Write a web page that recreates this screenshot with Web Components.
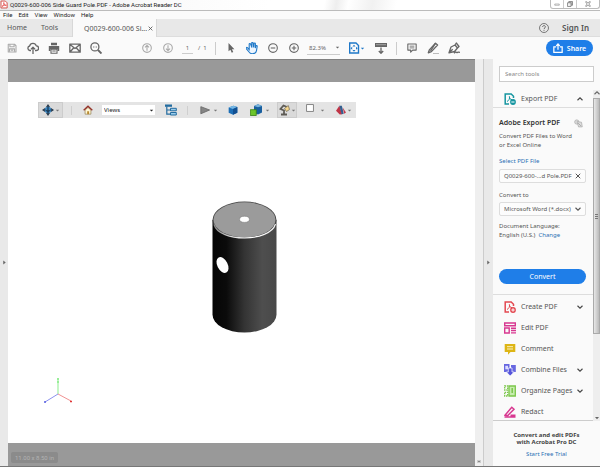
<!DOCTYPE html>
<html lang="en">
<head>
<meta charset="utf-8">
<title>Q0029-600-006 Side Guard Pole.PDF - Adobe Acrobat Reader DC</title>
<style>
html,body{height:100%;margin:0}
body{font-family:"Noto Sans","Open Sans",sans-serif;font-size:7px;color:#555;background:#fff}
</style>
</head>
<body>
<reader-app></reader-app>
<script>
const base = `<style>
*{box-sizing:border-box}
button,input,select{font:inherit;color:inherit;margin:0;padding:0;border:0;background:none;border-radius:0;min-width:0}
button{display:flex;align-items:center;justify-content:center}
h1,h2,p{margin:0;font-size:inherit;font-weight:inherit}
a{color:#2b70b4;text-decoration:none}
</style>`;
function define(name, html, setup) {
  const tpl = document.createElement('template');
  tpl.innerHTML = base + html;
  customElements.define(name, class extends HTMLElement {
    constructor() {
      super();
      this.attachShadow({mode: 'open'}).append(tpl.content.cloneNode(true));
    }
    connectedCallback() { if (setup) setup(this, this.shadowRoot); }
  });
}

const line = 'fill="none" stroke="currentColor" stroke-width="1.3" stroke-linejoin="round"';
const icons = {
  pdf: '<path d="M1.500.8h6.500l2.700 2.700v7.700h-9.200z" fill="#fff" stroke="#d6544d" stroke-width="1.500"/><path d="M3 9c2-1 3.500-4 2.700-6-.6 1 .5 4 3.700 4.200C6.500 6.800 4.500 8 3 9z" fill="none" stroke="#d22" stroke-width=".9"/>',
  save: `<g ${line}><path d="M1.500 1.500h7.500l1.800 1.800v7.500h-9.300z"/><path d="M3.500 1.500v3h5v-3M3 10.500V7h6v3.500M4.500 8.700h3"/></g>`,
  cloud: `<g ${line}><path d="M4 8.500H2.800A2.300 2.300 0 0 1 2.600 4 3.500 3.500 0 0 1 9.300 3.900 2.300 2.300 0 0 1 9.300 8.500H8"/><path d="M6 12V5.500M4 7.300l2-2 2 2"/></g>`,
  print: '<path d="M3 .8h6v2.500H3zM.8 4h10.400v5H9.500V7h-7v2H.8z" fill="currentColor"/><path d="M3 7.200h6v4H3zM4.300 9h3.400" fill="none" stroke="currentColor" stroke-width="1.100"/>',
  mail: `<g ${line}><path d="M.8 2.200h10.400v8H.8zM1 2.600l5 4 5-4M1 10l3.600-4M11 10 7.400 6"/></g>`,
  search: `<g ${line}><circle cx="4.900" cy="4.900" r="4"/><path d="m8 8 3.500 3.500" stroke-width="1.900"/><path d="M3 5h.8M4.700 5h.6M6.200 5H7" stroke-width="1"/></g>`,
  up: `<g ${line}><circle cx="6" cy="6" r="5.200"/><path d="M6 9.200V3M3.600 5.300 6 2.900l2.400 2.400"/></g>`,
  down: `<g ${line}><circle cx="6" cy="6" r="5.200"/><path d="M6 2.800V9M3.600 6.700 6 9.100l2.400-2.400"/></g>`,
  pointer: '<path d="M3 0v10l2.300-2 1.600 3.700 1.800-.8-1.600-3.500h3z" fill="currentColor"/>',
  hand: '<path d="M3.200 7.500 1.400 5.600C.5 5-.3 6 .4 6.800L3.500 10.500c.8 1 1.800 1.200 3 1.200 2.500 0 3.700-1 4-3l.7-4.400c0-1-1.200-1-1.400-.2L9.300 6l.1-4.300c0-.9-1.300-.9-1.400 0L7.700 5.400 7 .9C6.900 0 5.600.2 5.700 1.100L5.900 5.500 4.500 1.900c-.3-.8-1.500-.4-1.300.5z" fill="#eef6fe" stroke="#1f78c8" stroke-width="1.100"/>',
  minus: `<g ${line}><circle cx="6" cy="6" r="5.200"/><path d="M3.300 6h5.400"/></g>`,
  plus: `<g ${line}><circle cx="6" cy="6" r="5.200"/><path d="M3.300 6h5.400M6 3.300v5.400"/></g>`,
  fit: '<path d="M1.700 1h6.300l2.500 2.500V11H1.700z" fill="none" stroke="#1f78c8" stroke-width="1.400"/><path d="M6 2.800 7.500 4.500h-3zM6 9.800 4.500 8.100h3zM2.500 6.300 4.200 4.800v3zM9.700 6.300 8 4.800v3z" fill="#1f78c8"/>',
  ruler: '<path d="M0 1h12v4H0z" fill="currentColor"/><path d="M2 2.200v1M4 2.200v1M6 2.200v1M8 2.200v1M10 2.200v1" stroke="#fff" stroke-width=".8"/><path d="M6 5.500V11M3.800 9 6 11.300 8.200 9" fill="none" stroke="currentColor" stroke-width="1.300"/>',
  note: `<g ${line}><path d="M1 1.200h10v7.300H6.800l-2.400 2.500V8.500H1z"/><path d="M3.200 3.800h5.600M3.200 5.900h5.600" stroke-width="1"/></g>`,
  pen: `<path d="M6 11.500h6" stroke="#bbb"/><g ${line}><path d="M2.300 8 8.500 1.200 10.600 3 4.400 9.600 1.300 10.800z"/><path d="m8.500 1.200-5 8"/></g>`,
  sign: `<g ${line}><path d="M1 10.800 3 5l4-2 2.500 3-3 3.500zM7 3l1.300-2L11 4.500 9.500 6M1 10.800l3.700-3.500M6 11.300c2-2 2-1 2.800-.8s1-1 3.200 0"/></g>`,
  share: '<path d="M3.800 4.500H1v6.700h10V4.500H8.200M6 8V1.500M3.900 3.400 6 1.200l2.100 2.200" fill="none" stroke="#fff" stroke-width="1.500"/>',
  help: `<circle cx="6" cy="6" r="5.400" fill="none" stroke="currentColor" stroke-width=".9"/><path d="M4.300 4.800C4.300 2.500 7.800 2.600 7.700 4.700 7.600 6 6 5.900 6 7.300M6 8.300v1.100" fill="none" stroke="currentColor" stroke-width="1"/>`,
  caret: '<path d="M2 4h8L6 8.500z" fill="currentColor"/>',
  right: '<path d="M3 1v10l6-5z" fill="currentColor"/>',
  chev: '<path d="m1 3.500 5 5 5-5" fill="none" stroke="currentColor" stroke-width="2.200"/>',
  chevup: '<path d="m1 8.500 5-5 5 5" fill="none" stroke="currentColor" stroke-width="2.200"/>',
  close: '<path d="m1.500 1.500 9 9m0-9-9 9" fill="none" stroke="currentColor" stroke-width="2"/>',
  wmin: '<path d="M1.500 6h9v2.500h-9z" fill="#fff" stroke="#777"/>',
  wmax: '<path d="M3.500 1h7.500v7.500H3.500z" fill="#bbb" stroke="#777" stroke-width="1.500"/><path d="M1 3.500h7V11H1z" fill="#eee" stroke="#777" stroke-width="1.500"/>',
  wclose: '<path d="M1 1.500h3L6 4l2-2.500h3L8 6l3 4.500H8L6 8l-2 2.500H1L4 6z" fill="#eee" stroke="#777" stroke-width="1.200"/>',
  orbit: '<path d="M6 0 8 3H4zM6 12 4 9h4zM0 6l3-2v4zM12 6 9 8V4z" fill="#26384a"/><circle cx="6" cy="6" r="3.300" fill="#3c84bc"/><path d="M3.500 6c1.500 1.500 3.500 1.500 5 0M6 3v6" stroke="#12293f" fill="none"/>',
  home: '<path d="M2.500 6v5h7V6L6 3z" fill="#fff6d5" stroke="#8c7a4c" stroke-width=".8"/><path d="M.8 6.300 6 1.400l5.200 4.900" fill="none" stroke="#96332b" stroke-width="1.600"/><path d="M5 7.500h2.300V11H5z" fill="#b98a32"/>',
  tree: '<path d="M1.800 2.500v7.700H6M1.800 6H6" fill="none" stroke="#236ca0" stroke-width="1.200"/><path d="M0 .5h7v2.300H0z" fill="#236ca0"/><path d="M5.500 4.300h5.800v2.500H5.500zM5.500 8.500h5.800V11H5.500z" fill="#9ccdeb" stroke="#236ca0"/>',
  play: '<path d="M1 2v8.500L11.500 6z" fill="#858585" stroke="#666"/>',
  cube: '<path d="M.8 3 6.500.8l4.700 1.600v6.800L6 11.700.8 9.300z" fill="#1c6eb6"/><path d="M.8 3 6 4.800l5.200-2.400L6.500.8z" fill="#75b7e5"/><path d="M6 4.800v6.900l5.200-2.500V2.400z" fill="#114f91"/>',
  cubes: '<path d="M4 2 8 .3 12 2v6.500L8 10.500 4 9z" fill="#195f9f"/><path d="M4 2l4 1.300L12 2 8 .3z" fill="#78b4dd"/><path d="M.3 5.700h6V11.500h-6z" fill="#6cc52a" stroke="#397d17" stroke-width=".8"/>',
  lamp: '<path d="M3 10.500h6M6 10V6.500L2.500 5l3-3.500L9 3" fill="none" stroke="#5e5b55" stroke-width="1.800"/><path d="m6.500 4.500 3.800-3 1.200 4-3 2z" fill="#f6d68b" stroke="#77705c" stroke-width=".8"/>',
  box: '<path d="M.8.8h10.400v10.400H.8z" fill="#fff" stroke="#777" stroke-width="1.300"/>',
  section: '<path d="M0 7 4 1l3.500 10-3 .5z" fill="#c03446"/><path d="M4 1 7 .8l2.300 9.800-2.500.4z" fill="#345f8f"/><path d="m8 3 4 6-2.200 1.500z" fill="#c5384c"/>',
  export: '<path d="M9.500 5V3.200L7.200 1H1.200v10H5" fill="none" stroke="#1595a0" stroke-width="1.500"/><path d="M3 8.500c2-1 3-3 2.400-5 0 2 1 3 2.600 3.200" fill="none" stroke="#1595a0"/><circle cx="9" cy="9" r="2.900" fill="#1595a0"/><path d="M7.300 9h3.200" stroke="#fff"/>',
  create: '<path d="M9.500 5V3.200L7.200 1H1.200v10H5" fill="none" stroke="#e34850" stroke-width="1.500"/><path d="M3 8.500c2-1 3-3 2.400-5 0 2 1 3 2.600 3.200" fill="none" stroke="#e34850"/><circle cx="9" cy="9" r="2.900" fill="#e34850"/><path d="M7.300 9h3.400M9 7.300v3.400" stroke="#fff"/>',
  edit: '<path d="M.7 1h10.600v2.800H.7zM.7 6h4.500v5H.7z" fill="none" stroke="#d83790" stroke-width="1.400"/><path d="M7 6.200h5M7 8.500h5M7 10.900h5" stroke="#d83790" stroke-width="1.400"/>',
  comment: '<path d="M.7 1h10.600v8H6.500L4 11.700V9H.7z" fill="#ddb515"/><path d="M3 3.700h6M3 6h6" stroke="#fff8d8" stroke-width=".9"/>',
  combine: '<path d="M0 0h5.500v8H0zM7 1h4.800v7H7z" fill="#6767e0"/><path d="M1.300 1.800h2.700v3.500H1.300z" fill="#dcdcff"/><path d="M4.300 4h3.700v4h2.200L6.200 12 2.300 8h2z" fill="#5454da" stroke="#fff" stroke-width=".7"/>',
  organize: '<path d="M.7 1h3v4h-3zM.7 7.300h3V11h-3z" fill="none" stroke="#7bc64a" stroke-width="1.300" stroke-dasharray="1.500 .8"/><path d="M5 1h6.300v10H5z" fill="#c6ecae" stroke="#7bc64a" stroke-width="1.300"/><path d="M8.200 3v5" stroke="#7bc64a" stroke-width="1.500"/>',
  redact: '<path d="M1 9.200 7.800 1.300 10 3.200 3.500 9.800z" fill="none" stroke="#d83790" stroke-width="1.500"/><path d="M.5 11h11M6.500 9.300h5" stroke="#d83790" stroke-width="1.700"/>',
  copy: '<circle cx="3.700" cy="4" r="2.800" fill="#ddd" stroke="#aaa"/><path d="m4 3.500 6 .8 1 6.200H6z" fill="#ddd" stroke="#aaa"/><path d="m5.500 5.500 3.700 3.700" stroke="#999"/>'
};
define('ui-icon', `<style>:host{display:inline-block;flex:none;width:12px;height:12px}:host([s]){width:6px;height:6px}:host([m]){width:10px;height:10px}:host([t]){width:5px;height:5px}svg{display:block;width:100%;height:100%}</style><svg viewBox="0 0 12 12" aria-hidden="true"></svg>`,
  (h, r) => { r.querySelector('svg').innerHTML = icons[h.getAttribute('name')]; });

define('title-bar', `<style>
:host{display:flex;align-items:flex-start;height:11px;background:linear-gradient(100deg,#e7e7e7,#fafafa 25%,#fff 45%,#fff 54%,#eee 56%,#fff 58%,#f1f1f1 62%,#fff 66%);border-bottom:1px solid #bbb;font:6px/10px Roboto,sans-serif;color:#222}
h1{flex:1;margin-left:2px;white-space:nowrap}
.w{display:flex;border:1px solid #bbb;border-top:0;border-radius:0 0 3px 3px;height:9px}
.w button{width:13px;border-right:1px solid #ccc}.w button:last-child{width:22px;border:0}
</style><ui-icon name="pdf" style="width:8px;height:9px"></ui-icon><h1>Q0029-600-006 Side Guard Pole.PDF - Adobe Acrobat Reader DC</h1>
<div class="w"><button aria-label="Minimize"><ui-icon s name="wmin"></ui-icon></button><button aria-label="Restore"><ui-icon s name="wmax"></ui-icon></button><button aria-label="Close"><ui-icon s name="wclose"></ui-icon></button></div>`);

define('menu-bar', `<style>:host{display:flex;height:8px;gap:6px;padding-left:3px;background:#fafafa;font:6px/8px Roboto,sans-serif;color:#222}button{height:8px}</style>
<button>File</button><button>Edit</button><button>View</button><button>Window</button><button>Help</button>`);

define('tab-bar', `<style>
:host{display:flex;height:18px;background:#e8e8e8;border-bottom:1px solid #ddd;font-size:7px;line-height:17px;white-space:nowrap}
.h{padding-left:7px;width:34px;justify-content:flex-start}.t{padding-left:7px;width:38px;justify-content:flex-start}
.a{width:85px;background:#fafafa;height:18px;display:flex;align-items:center;justify-content:space-between;padding:0 3px 0 11px;border:solid #d8d8d8;border-width:0 1px}
.s{flex:1}.q{margin-right:13px}.i{font-size:8px;font-weight:600;margin-right:11px}
</style><button class="h">Home</button><button class="t">Tools</button><div class="a"><span>Q0029-600-006 Si...</span><button aria-label="Close tab"><ui-icon t name="close"></ui-icon></button></div><span class="s"></span><button class="q" aria-label="Help"><ui-icon m name="help"></ui-icon></button><button class="i">Sign In</button>`);

define('tool-bar', `<style>
:host{display:flex;align-items:center;height:22px;background:#fafafa;color:#666;padding:0 7px 0 1px;font-size:6px}
.g{display:grid;grid-auto-flow:column;grid-auto-columns:1fr}.g button{height:20px}
.f{width:105px;margin-right:30px}.n{width:42px;color:#aaa}
.p{width:11px;text-align:center;border-bottom:1px solid #ccc;margin:0 5px 0 4px;height:12px}
.v{width:1px;height:13px;background:#ccc}.c{width:83px}
.z{width:33px;display:flex;justify-content:space-between;border-bottom:1px solid #ccc;height:13px;margin:0 8px 0 3px}
.fit{color:#1f78c8;margin-right:10px}.m{width:62px;margin-left:5px}.sp{flex:1}
.share{background:#1f7ee8;color:#fff;border-radius:9px;width:47px;height:16px;gap:4px;font-size:7px;font-weight:600}
.dim{color:#aaa}
</style>
<div class="g f"><button class="dim" aria-label="Save"><ui-icon m name="save"></ui-icon></button><button aria-label="Upload"><ui-icon name="cloud"></ui-icon></button><button aria-label="Print"><ui-icon name="print"></ui-icon></button><button aria-label="Mail"><ui-icon name="mail"></ui-icon></button><button aria-label="Find"><ui-icon name="search"></ui-icon></button></div>
<div class="g n"><button aria-label="Previous page"><ui-icon m name="up"></ui-icon></button><button aria-label="Next page"><ui-icon m name="down"></ui-icon></button></div>
<input class="p" value="1" aria-label="Page"><span style="width:17px">/&nbsp; 1</span><span class="v"></span>
<div class="g c" style="margin-left:5px"><button aria-label="Select"><ui-icon m name="pointer"></ui-icon></button><button aria-label="Pan"><ui-icon name="hand"></ui-icon></button><button aria-label="Zoom out"><ui-icon m name="minus"></ui-icon></button><button aria-label="Zoom in"><ui-icon m name="plus"></ui-icon></button></div>
<button class="z" aria-label="Zoom level"><span style="margin-left:2px">82.3%</span><ui-icon t name="caret"></ui-icon></button>
<button class="fit" aria-label="Fit page"><ui-icon name="fit"></ui-icon><ui-icon t name="caret"></ui-icon></button>
<button aria-label="Measure" style="margin-right:9px"><ui-icon name="ruler"></ui-icon></button><span class="v"></span>
<div class="g m"><button aria-label="Comment"><ui-icon m name="note"></ui-icon></button><button aria-label="Highlight"><ui-icon name="pen"></ui-icon></button><button aria-label="Sign"><ui-icon name="sign"></ui-icon></button></div><span class="sp"></span>
<button class="share"><ui-icon m name="share"></ui-icon>Share</button>`);

define('model-bar', `<style>
:host{display:flex;align-items:center;width:318px;height:16px;background:#e4e4e4;color:#777;font-size:6px}
.b{height:16px;border:1px solid #ccc;background:#dadada;gap:1px}
.v{width:1px;height:9px;background:#cfcfcf}
.s{display:flex;position:relative;width:53px;height:10px;margin:0 10px 0 9px;background:#fff;color:#222}
select{appearance:none;width:100%;height:10px;padding-left:2px;line-height:10px}
.s ui-icon{position:absolute;right:1px;top:3px}
button{gap:3px}
</style>
<button class="b" style="width:25px" aria-label="Rotate"><ui-icon name="orbit"></ui-icon><ui-icon t name="caret"></ui-icon></button><span class="v" style="margin:0 11px 0 8px"></span>
<button aria-label="Default view"><ui-icon m name="home"></ui-icon></button>
<span class="s"><select aria-label="Views"><option>Views</option></select><ui-icon t name="caret"></ui-icon></span>
<button aria-label="Model tree"><ui-icon name="tree"></ui-icon></button><span class="v" style="margin:0 12px 0 10px"></span>
<button aria-label="Play"><ui-icon m name="play"></ui-icon><ui-icon t name="caret"></ui-icon></button>
<button aria-label="Projection" style="margin:0 12px 0 10px"><ui-icon m name="cube"></ui-icon></button>
<button aria-label="Render mode"><ui-icon name="cubes"></ui-icon><ui-icon t name="caret"></ui-icon></button>
<button class="b" style="width:20px;margin:0 9px 0 7px" aria-label="Lighting"><ui-icon name="lamp"></ui-icon><ui-icon t name="caret"></ui-icon></button>
<button aria-label="Background" style="gap:6px;margin-right:11px"><ui-icon name="box" style="width:8px;height:8px;margin-bottom:4px"></ui-icon><ui-icon t name="caret"></ui-icon></button>
<button aria-label="Section" style="gap:1px"><ui-icon m name="section"></ui-icon><ui-icon t name="caret"></ui-icon></button>`);

define('doc-view', `<style>
:host{display:flex;flex-direction:column;background:#999;border-top:1px solid #808080;min-height:0}
.page{flex:1;margin-top:22px;background:#fff;display:flex;flex-direction:column;align-items:flex-start;min-height:0}
model-bar{margin:20px 0 0 30px}
.cyl{display:block;margin:82px auto 0;width:67px;height:134px;position:relative;left:3px}
.ax{display:block;margin:43px 0 0 33px;width:34px;height:32px}
.foot{height:23px;padding:9px 0 0 3px}
.size{display:inline-block;background:#8b8b8b;border-radius:2px;color:#b2b2b2;font:6px/11px Roboto,sans-serif;padding:0 4px}
</style>
<div class="page"><model-bar></model-bar>
<svg class="cyl" viewBox="0 0 67 134" role="img" aria-label="Side guard pole"><defs><linearGradient id="b"><stop offset="0" stop-color="#050505"/><stop offset=".22" stop-color="#0b0b0b"/><stop offset=".5" stop-color="#343434"/><stop offset=".78" stop-color="#4e4e4e"/><stop offset="1" stop-color="#484848"/></linearGradient><linearGradient id="r"><stop offset="0" stop-color="#888"/><stop offset=".3" stop-color="#ddd"/><stop offset=".6" stop-color="#fff"/><stop offset="1" stop-color="#eee"/></linearGradient></defs>
<path d="M1.500 20v94.500a32 18 0 0 0 64 0V20z" fill="url(#b)"/><ellipse cx="33.500" cy="20" rx="32" ry="18.500" fill="#444"/><path d="M3 24.500C8 42.500 59 42.500 64.500 24" fill="none" stroke="url(#r)" stroke-width="1.200"/><ellipse cx="33.500" cy="19.800" rx="31" ry="17.500" fill="#9b9b9b"/><ellipse cx="33.500" cy="19.300" rx="4.900" ry="3.100" fill="#fff" stroke="#777" stroke-width=".6"/><ellipse cx="11.500" cy="65" rx="5.200" ry="8.500" transform="rotate(-27 11.500 65)" fill="#fff"/></svg>
<svg class="ax" viewBox="0 0 34 32" aria-hidden="true"><path d="M17 17V1" stroke="#9ff09f" stroke-width="1.200"/><path d="M16 2h2M16 5h2" stroke="#6be56b"/><path d="M17 17 4 25" stroke="#8b91ee"/><path d="m17 17 13 7" stroke="#f19393"/><path d="M3 25h2" stroke="#555de0" stroke-width="1.500"/><path d="M29 24.500h2" stroke="#df3636" stroke-width="1.500"/></svg></div>
<div class="foot"><span class="size">11.00 x 8.50 in</span></div>`);

define('pane-splitter', `<style>:host{display:flex;align-items:center;justify-content:center;background:#e9e9e9}button{height:14px;color:#666}</style><button aria-label="Toggle pane"><ui-icon t name="right"></ui-icon></button>`);

define('doc-scroll', `<style>:host{display:flex;align-items:flex-end;justify-content:center;background:#efefef;border-right:1px solid #ccc;padding-bottom:3px}i{width:4px;height:3px;background:#888;border:1px solid #ccc}</style><i></i>`);

define('tool-item', `<style>:host{display:flex;height:21px}button{flex:1;justify-content:flex-start;padding:0 10px 0 11px;gap:5px}span{flex:1;text-align:left;white-space:nowrap}.e{color:#444}:host([head]){height:18px;border-bottom:1px solid #ddd}</style><button><ui-icon class="k" name="pdf"></ui-icon><span><slot></slot></span></button>`,
  (h, r) => {
    const k = document.createElement('ui-icon'); k.setAttribute('name', h.getAttribute('icon'));
    r.querySelector('.k').replaceWith(k);
    if (h.hasAttribute('arrow')) { const e = document.createElement('ui-icon'); e.className = 'e'; e.setAttribute('s', ''); e.setAttribute('name', h.getAttribute('arrow')); r.querySelector('button').append(e); }
  });

define('export-form', `<style>
:host{display:flex;flex-direction:column;height:187px;padding:9px 7px 10px 6px;font-size:6px;line-height:9px;border-bottom:1px solid #ddd}
.t{display:flex;justify-content:space-between;align-items:center;font-size:7px;line-height:12px;font-weight:600;color:#333;padding-right:3px}
p{margin-top:3px;white-space:nowrap}.sel{margin-top:7px}
.f{display:flex;align-items:center;justify-content:space-between;height:14px;border:1px solid #ddd;border-radius:2px;padding:0 4px;margin-top:3px;background:#fcfcfc}
label{margin-top:8px}.d{position:relative;margin-top:2px;padding:0}.d select{appearance:none;flex:1;height:12px;padding-left:4px}.d ui-icon{position:absolute;right:4px;top:3px}
.l{margin-top:6px}.go{margin-top:auto;height:15px;border-radius:8px;background:#1f7ee8;color:#fff;font-size:7px}
</style><h2 class="t">Adobe Export PDF<ui-icon name="copy" style="width:9px;height:9px"></ui-icon></h2><p>Convert PDF Files to Word<br>or Excel Online</p>
<a class="sel" href="#">Select PDF File</a><div class="f"><span>Q0029-600-...d Pole.PDF</span><button aria-label="Remove file"><ui-icon s name="close"></ui-icon></button></div>
<label for="fmt">Convert to</label><div class="f d"><select id="fmt"><option>Microsoft Word (*.docx)</option></select><ui-icon s name="chev"></ui-icon></div>
<p class="l">Document Language:<br>English (U.S.)&nbsp; <a href="#">Change</a></p><button class="go">Convert</button>`);

define('tools-pane', `<style>
:host{display:flex;flex-direction:column;background:#fafafa;min-height:0}
input{height:16px;margin:7px 6px 8px 6px;border:1px solid #ccc;background:#fff;padding:0 5px;font-size:6px}
input::placeholder{color:#888;opacity:1}
.m{display:flex;height:331px}.l{flex:1;min-width:0;border-bottom:1px solid #ccc}
.sb{width:7px;background:#eee;display:flex;flex-direction:column;align-items:center;color:#666}
.sb i{height:236px;width:7px;background:linear-gradient(90deg,#e7e7e7,#bbb);border:1px solid #aaa;margin:2px 0 auto;display:flex;flex-direction:column;align-items:center;justify-content:center;gap:1px}
.sb b{width:3px;height:1px;background:#777}
.ad{text-align:center;font-size:6px;line-height:7px;font-weight:700;color:#444;padding-top:11px;flex:1}
.ad a{display:block;font-weight:400;margin-top:4px;line-height:9px}
</style><input placeholder="Search tools" aria-label="Search tools">
<div class="m"><div class="l"><tool-item head icon="export" arrow="chevup">Export PDF</tool-item><export-form></export-form>
<tool-item icon="create" arrow="chev" style="margin-top:1px">Create PDF</tool-item><tool-item icon="edit">Edit PDF</tool-item><tool-item icon="comment">Comment</tool-item><tool-item icon="combine" arrow="chev">Combine Files</tool-item><tool-item icon="organize" arrow="chev">Organize Pages</tool-item><tool-item icon="redact">Redact</tool-item></div>
<div class="sb"><ui-icon s name="chevup"></ui-icon><i><b></b><b></b><b></b></i><ui-icon s name="caret"></ui-icon></div></div>
<div class="ad">Convert and edit PDFs<br>with Acrobat Pro DC<a href="#">Start Free Trial</a></div>`);

define('reader-app', `<style>
:host{display:flex;flex-direction:column;height:100vh;overflow:hidden}
main{flex:1;min-height:0;display:grid;grid-template-columns:8px 1fr 9px 9px 107px;border-bottom:1px solid #777}
</style><title-bar></title-bar><menu-bar></menu-bar><tab-bar></tab-bar><tool-bar></tool-bar><main><pane-splitter></pane-splitter><doc-view></doc-view><doc-scroll></doc-scroll><pane-splitter></pane-splitter><tools-pane></tools-pane></main>`);
</script>
</body>
</html>
